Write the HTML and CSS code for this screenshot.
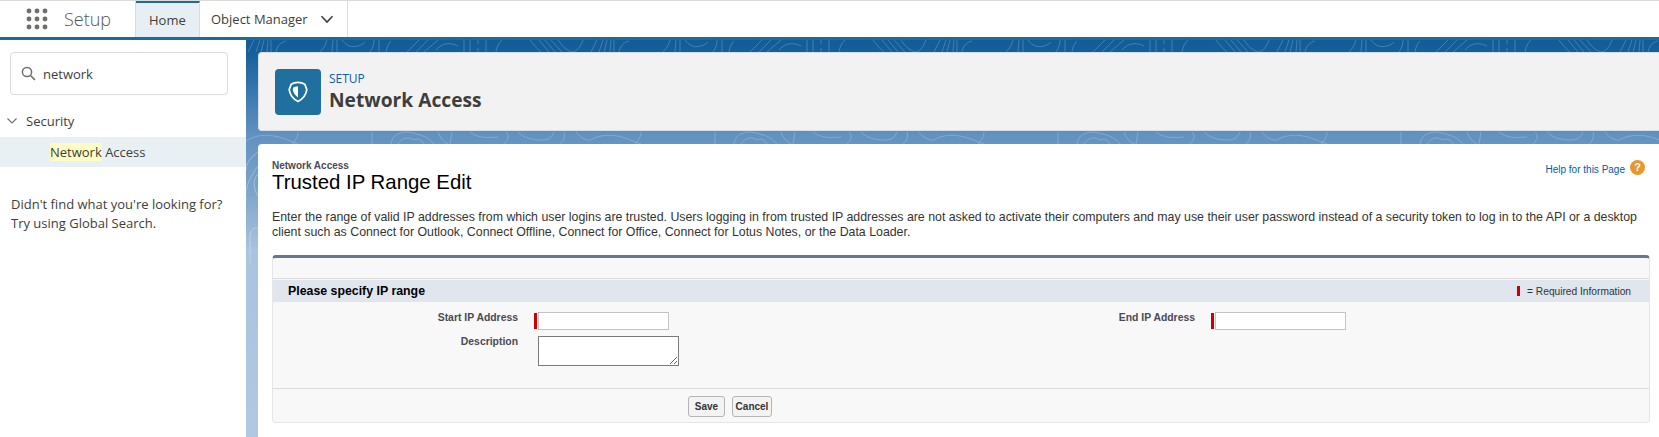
FILE: index.html
```html
<!DOCTYPE html>
<html lang="en">
<head>
  <meta charset="UTF-8">
  <title>Network Access | Setup</title>
  <link rel="stylesheet" href="styles.css">
</head>
<body>
  <header class="topbar">
    <div class="app-launcher">
      <svg class="waffle" width="22" height="22" viewBox="0 0 22 22" fill="#706e6b">
        <circle cx="3" cy="3" r="2.4"/><circle cx="11" cy="3" r="2.4"/><circle cx="19" cy="3" r="2.4"/>
        <circle cx="3" cy="11" r="2.4"/><circle cx="11" cy="11" r="2.4"/><circle cx="19" cy="11" r="2.4"/>
        <circle cx="3" cy="19" r="2.4"/><circle cx="11" cy="19" r="2.4"/><circle cx="19" cy="19" r="2.4"/>
      </svg>
      <span class="app-name">Setup</span>
    </div>
    <nav class="tabs">
      <a class="tab active">Home</a>
      <a class="tab">Object Manager
        <svg class="tab-chevron" width="14" height="9" viewBox="0 0 14 9" fill="none" stroke="#3e3e3c" stroke-width="1.6"><path d="M1.5 1.2 7 7l5.5-5.8"/></svg>
      </a>
    </nav>
  </header>

  <div class="layout">
    <aside class="sidebar">
      <div class="search-box">
        <svg width="15" height="15" viewBox="0 0 15 15" fill="none" stroke="#706e6b" stroke-width="1.5"><circle cx="6" cy="6" r="4.6"/><path d="m9.5 9.5 4.4 4.4"/></svg>
        <span>network</span>
      </div>
      <div class="tree-head">
        <svg width="10" height="6" viewBox="0 0 10 6" fill="none" stroke="#706e6b" stroke-width="1.1"><path d="M.5.5 5 5 9.500.5"/></svg>
        <span>Security</span>
      </div>
      <div class="tree-item"><mark>Network</mark> Access</div>
      <p class="search-hint">Didn't find what you're looking for?<br>Try using Global Search.</p>
    </aside>

    <main class="content">
      <svg class="contours" width="1413" height="397" fill="none">
        <defs>
          <pattern id="contour-tile" width="343" height="397" patternUnits="userSpaceOnUse">
            <g stroke="#ffffff" stroke-opacity="0.2">
              <!-- strip under the top bar -->
              <path d="M2 12 8 0M10 12 14 0M15 12 18 0M21 12 22 0M25 12V0M30 12C31 6 35 2 40 1"/>
              <path d="M74 12C78 8 80 4 81 0M86 12 87 0M91 12V0M96 0C100 5 104 8 112 6 116 5 118 3 119 2M124 12C127 8 128 4 128 0M133 12V0M140 12C141 6 143 3 145 1"/>
              <path d="M161 12 173 0M170 12 182 0M178 12 192 0M190 10C196 3 204 2 212 6M218 12V0M224 12V0M232 12V8M232 4V0M240 12V0M250 12C251 6 253 3 256 0"/>
              <path d="M284 0C288 5 291 9 295 12M293 0 303 12M299 0 309 12M305 0 316 12M312 0C316 6 320 10 326 12 331 12 335 6 337 0"/>
              <!-- strip between the two cards -->
              <path d="M0 101C10 94 24 94 36 98 42 100 46 102 52 104M46 104C50 100 52 96 52 92"/>
              <path d="M126 104V92M145 104C146 96 152 92 162 92 172 94 182 96 188 104M152 104C156 98 162 96 168 100 172 98 176 100 178 104"/>
              <path d="M192 92C194 98 198 102 202 104M206 92 204 104M224 92C232 98 240 98 252 97M260 92C264 96 262 100 258 104"/>
              <path d="M272 92C278 98 286 100 296 100 304 100 306 96 308 92M318 92C320 98 316 102 314 104M330 92C334 98 340 100 343 100"/>
            </g>
          </pattern>
        </defs>
        <rect width="1413" height="397" fill="url(#contour-tile)"/>
        <path d="M12 112C4 118 0 124 0 130M0 160C-2 150 4 136 12 126M12 134C6 140 8 150 12 156M12 189C8 186 4 190 4 198V225" stroke="#ffffff" stroke-opacity="0.3"/>
      </svg>

      <section class="page-head">
        <div class="page-icon">
          <svg width="20" height="22" viewBox="0 0 20 22" fill="none" stroke="#fff" stroke-width="1.8" stroke-linejoin="round">
            <path d="M3.200 3.200C7 .8 13 .8 16.800 3.200L18.800 8.500C18.200 13.500 14.800 18 10 20.500 5.200 18 1.800 13.500 1.200 8.500Z"/>
            <path d="M10 5.500C7.800 5.500 6 6 5 6.800L4.800 9C5.500 12 7.500 14.800 10 16.500Z" fill="#fff" stroke="none"/>
          </svg>
        </div>
        <div>
          <div class="page-kicker">SETUP</div>
          <div class="page-title">Network Access</div>
        </div>
      </section>

      <section class="classic-card">
        <div class="classic-head">
          <div>
            <div class="crumb">Network Access</div>
            <h1>Trusted IP Range Edit</h1>
          </div>
          <div class="help">
            <a>Help for this Page</a>
            <span class="help-icon">?</span>
          </div>
        </div>

        <p class="intro">Enter the range of valid IP addresses from which user logins are trusted. Users logging in from trusted IP addresses are not asked to activate their computers and may use their user password instead of a security token to log in to the API or a desktop client such as Connect for Outlook, Connect Offline, Connect for Office, Connect for Lotus Notes, or the Data Loader.</p>

        <div class="edit-block">
          <div class="block-top"></div>
          <div class="block-section">
            <h3>Please specify IP range</h3>
            <div class="required-key"><i class="req-bar"></i><span>= Required Information</span></div>
          </div>
          <div class="form-grid">
            <label>Start IP Address</label>
            <div class="field"><i class="req-bar"></i><input type="text"></div>
            <label>End IP Address</label>
            <div class="field"><i class="req-bar"></i><input type="text"></div>
            <label>Description</label>
            <div class="field-plain"><textarea></textarea></div>
          </div>
          <div class="block-buttons">
            <button type="button" class="btn-save">Save</button>
            <button type="button" class="btn-cancel">Cancel</button>
          </div>
        </div>
      </section>
    </main>
  </div>
</body>
</html>
```

FILE: styles.css
```css
/* Global */
html, body {
  height: 437px;
  overflow: hidden;
}

body {
  margin: 0;
  font-family: "Open Sans", sans-serif;
  color: #3e3e3c;
  background: #fff;
}

/* Top bar */
.topbar {
  display: flex;
  height: 36px;
  background: #fff;
  border-top: 1px solid #dddbda;
  border-bottom: 3px solid #1b6c9a;
}

.app-launcher {
  display: flex;
  align-items: center;
  width: 135px;
  box-sizing: border-box;
  padding-left: 26px;
}

.app-name {
  margin-left: 16px;
  font-size: 18px;
  font-weight: 300;
  color: #54565a;
}

.tabs {
  display: flex;
  border-left: 1px solid #dddbda;
}

.tab {
  display: flex;
  align-items: center;
  padding: 0 13px 0 11px;
  font-size: 13px;
  color: #3e3e3c;
  border-right: 1px solid #dddbda;
  box-sizing: border-box;
}

.tab.active {
  width: 64px;
  padding: 0 0 0 13px;
  background: #e7eff5;
  border-top: 2px solid #1b6c9a;
}

.tab-chevron {
  margin-left: 12px;
}

/* Page layout */
.layout {
  display: flex;
  height: 397px;
}

/* Sidebar */
.sidebar {
  width: 246px;
  flex-shrink: 0;
  background: #fff;
  font-size: 13px;
}

.search-box {
  display: flex;
  align-items: center;
  gap: 7px;
  height: 43px;
  margin: 12px 18px 0 10px;
  padding-left: 10px;
  box-sizing: border-box;
  border: 1px solid #dddbda;
  border-radius: 4px;
  font-size: 13px;
}

.tree-head {
  display: flex;
  align-items: center;
  gap: 9px;
  height: 30px;
  margin-top: 11px;
  padding-left: 7px;
}

.tree-item {
  height: 30px;
  line-height: 30px;
  margin-top: 1px;
  padding-left: 50px;
  background: #e9f0f4;
}

.tree-item mark {
  background: #fdfdc4;
  color: inherit;
}

.search-hint {
  margin: 28px 0 0 11px;
  line-height: 19px;
}

/* Main area */
.content {
  position: relative;
  flex: 1;
  padding: 12px 0 0 12px;
  overflow: hidden;
  background: linear-gradient(to bottom, #125c98 0, #14609b 12px, #6192c0 95px, #7ba4cb 150px, #aac3de 210px, #b1c8e2 397px);
}

.contours {
  position: absolute;
  top: 0;
  left: 0;
}

.page-head {
  position: relative;
  display: flex;
  align-items: center;
  gap: 8px;
  height: 79px;
  padding-left: 16px;
  background: #f3f2f2;
  border: 1px solid #d8dde6;
  border-right: 0;
  border-radius: 4px 0 0 4px;
  box-sizing: border-box;
}

.page-icon {
  display: flex;
  align-items: center;
  justify-content: center;
  width: 46px;
  height: 46px;
  background: #1f6f9f;
  border-radius: 4px;
}

.page-kicker {
  font-size: 12px;
  line-height: 15px;
  color: #0b5cab;
}

.page-title {
  padding-top: 1px;
  font-size: 19.200px;
  line-height: 26px;
  font-weight: 700;
  color: #3e3e3c;
}

/* Classic page card */
.classic-card {
  position: relative;
  height: 293px;
  margin-top: 13px;
  padding: 16px 9px 0 14px;
  box-sizing: border-box;
  background: #fff;
  border-radius: 4px 0 0 0;
  font-family: "Liberation Sans", Arial, sans-serif;
}

.classic-head {
  display: flex;
  justify-content: space-between;
}

.crumb {
  font-size: 10px;
  line-height: 11px;
  font-weight: 700;
  color: #4a4a56;
}

h1 {
  margin: 0;
  font-size: 20.400px;
  line-height: 22px;
  font-weight: 400;
  color: #000;
}

.help {
  display: flex;
  align-items: center;
  gap: 5px;
  height: 16px;
  margin: 1px 5px 0 0;
  font-size: 10px;
  color: #015ba7;
}

.help-icon {
  width: 15px;
  height: 15px;
  margin-top: -3px;
  border-radius: 50%;
  background: #e8972e;
  color: #fff;
  font-size: 11px;
  line-height: 15px;
  font-weight: 700;
  text-align: center;
}

.intro {
  margin: 17px 0 0 0;
  font-size: 12.350px;
  line-height: 15px;
  color: #333;
}

/* Edit block */
.edit-block {
  margin-top: 15px;
  height: 168px;
  display: flex;
  flex-direction: column;
  box-sizing: border-box;
  background: #f8f8f8;
  border: 1px solid #e6e6e6;
  border-top: 3px solid #6c7390;
  border-radius: 4px;
}

.block-top {
  height: 20px;
  border-bottom: 1px solid #dbdbdb;
}

.block-section {
  display: flex;
  align-items: center;
  justify-content: space-between;
  height: 22px;
  margin-top: 1px;
  padding: 0 18px 0 15px;
  background: #e0e5ee;
}

.block-section h3 {
  margin: 0;
  font-size: 12.350px;
  font-weight: 700;
  color: #000;
}

.required-key {
  display: flex;
  align-items: center;
  gap: 7px;
  font-size: 10.200px;
  color: #333;
}

.req-bar {
  display: block;
  width: 3px;
  height: 16px;
  background: #c00;
}

.required-key .req-bar {
  height: 10px;
}

.form-grid {
  display: grid;
  grid-template-columns: 245px 400px 237px 1fr;
  column-gap: 20px;
  row-gap: 6px;
  align-content: start;
  flex: 1;
  padding-top: 10px;
  border-bottom: 1px solid #dbdbdb;
}

.form-grid label {
  font-size: 10.400px;
  line-height: 12px;
  font-weight: 700;
  text-align: right;
  color: #4a4a56;
}

.field {
  display: flex;
  align-items: center;
  gap: 1px;
  margin-left: -4px;
}

.field input {
  width: 131px;
  height: 18px;
  padding: 0;
  box-sizing: border-box;
  background: #fff;
  border: 1px solid #c4c4c4;
}

.field-plain textarea {
  display: block;
  width: 141px;
  height: 30px;
  padding: 0;
  box-sizing: border-box;
  background: #fff;
  border: 1px solid #7b7b7b;
}

.block-buttons {
  display: flex;
  gap: 7px;
  align-items: center;
  justify-content: flex-start;
  height: 33px;
  padding: 1px 0 0 415px;
  box-sizing: border-box;
}

.block-buttons button {
  height: 21px;
  padding: 0;
  font-family: "Liberation Sans", Arial, sans-serif;
  font-size: 10px;
  font-weight: 700;
  color: #333;
  background: #f3f3f3;
  border: 1px solid #b5b5b5;
  border-radius: 3px;
}

.btn-save {
  width: 37px;
}

.btn-cancel {
  width: 40px;
}
```
